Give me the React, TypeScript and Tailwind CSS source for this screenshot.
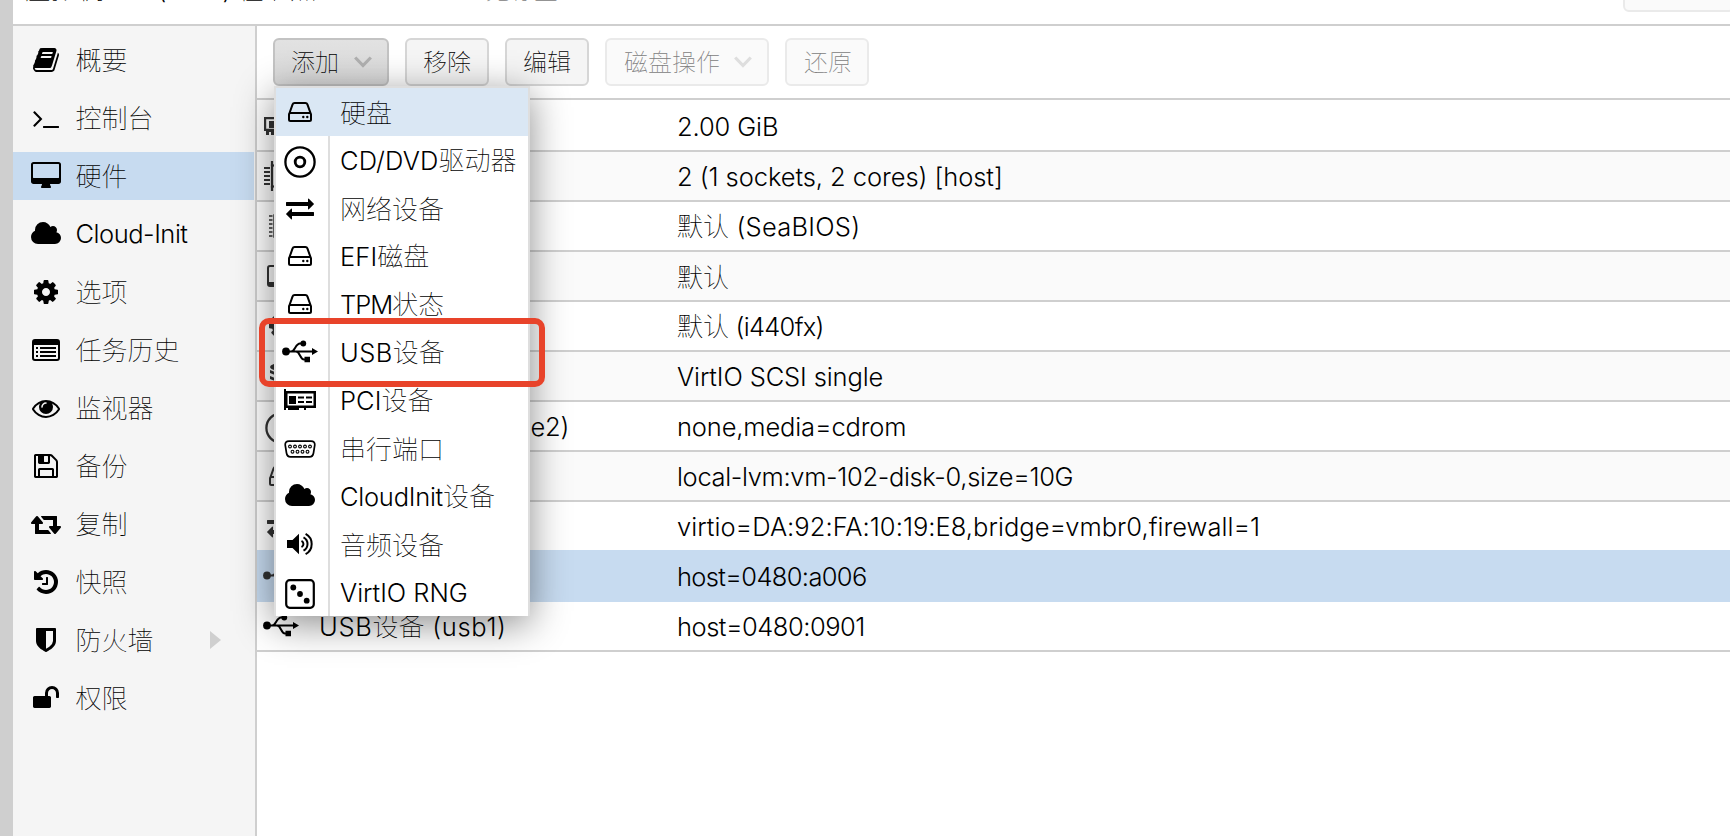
import type { ReactNode } from "react";

/* ---------- text ---------- */

/** Splits a label into Latin and Chinese runs so each gets its own optical size. */
function Label({ text, tracking = "tracking-[-0.255px]" }: { text: string; tracking?: string }) {
  const runs = text.match(/[\u4e00-\u9fff]+|[^\u4e00-\u9fff]+/g) ?? [];
  return (
    <span className="whitespace-pre">
      {runs.map((run, i) =>
        /[\u4e00-\u9fff]/.test(run) ? (
          <span key={i} className="font-thin font-['Noto_Sans_CJK_SC',sans-serif]">
            {run}
          </span>
        ) : (
          <span key={i} className={`font-light font-['Inter','Liberation_Sans',sans-serif] text-[25.5px] ${tracking}`}>
            {run}
          </span>
        ),
      )}
    </span>
  );
}

/* ---------- icons ---------- */

function Glyph({ d, w = 1792 }: { d: string; w?: number }) {
  return (
    <svg
      viewBox={w === 1792 ? "0 0 1792 1792" : w === 1920 ? "0 0 1920 1792" : "64 0 1920 1792"}
      className={w === 1792 ? "h-[28px] w-[28px] shrink-0" : "h-[28px] w-[30px] shrink-0"}
      fill="currentColor"
    >
      <path d={d} />
    </svg>
  );
}

const P = {
  book: "M1703 478q40 57 18 129l-275 906q-19 64-76.5 107.5t-122.5 43.5h-923q-77 0-148.5-53.5t-99.5-131.5q-24-67-2-127 0-4 3-27t4-37q1-8-3-21.5t-3-19.5q2-11 8-21t16.5-23.5 16.5-23.5q23-38 45-91.5t30-91.5q3-10 .5-30t-.5-28q3-11 17-28t17-23q21-36 42-92t25-90q1-9-2.5-32t.5-28q4-13 22-30.5t22-22.5q19-26 42.5-84.5t27.5-96.5q1-8-3-25.5t-2-26.5q2-8 9-18t18-23 17-21q8-12 16.5-30.5t15-35 16-36 19.5-32 26.5-23.5 36-11.5 47.5 5.5l-1 3q38-9 51-9h761q74 0 114 56t18 130l-274 906q-36 119-71.5 153.5t-128.5 34.5h-869q-27 0-38 15-11 16-1 43 24 70 144 70h923q29 0 56-15.5t35-41.5l300-987q7-22 5-57 38 15 59 43zm-1064 2q-4 13 2 22.5t20 9.5h608q13 0 25.5-9.5t16.5-22.5l21-64q4-13-2-22.5t-20-9.5h-608q-13 0-25.5 9.5t-16.5 22.5zm-83 256q-4 13 2 22.5t20 9.5h608q13 0 25.5-9.5t16.5-22.5l21-64q4-13-2-22.5t-20-9.5h-608q-13 0-25.5 9.5t-16.5 22.5z",
  terminal:
    "M649 983l-466 466q-10 10-23 10t-23-10l-50-50q-10-10-10-23t10-23l393-393-393-393q-10-10-10-23t10-23l50-50q10-10 23-10t23 10l466 466q10 10 10 23t-10 23zm1079 457v64q0 14-9 23t-23 9h-960q-14 0-23-9t-9-23v-64q0-14 9-23t23-9h960q14 0 23 9t9 23z",
  desktop:
    "M1792 992v-832q0-13-9.500-22.500t-22.500-9.500h-1600q-13 0-22.500 9.500t-9.500 22.500v832q0 13 9.500 22.500t22.500 9.500h1600q13 0 22.500-9.500t9.500-22.500zm128-832v1088q0 66-47 113t-113 47h-544q0 37 16 77.500t32 71 16 43.500q0 26-19 45t-45 19h-512q-26 0-45-19t-19-45q0-14 16-44t32-70 16-78h-544q-66 0-113-47t-47-113v-1088q0-66 47-113t113-47h1600q66 0 113 47t47 113z",
  cloud:
    "M1984 1152q0 159-112.5 271.5t-271.500 112.500h-1088q-185 0-316.500-131.500t-131.500-316.500q0-132 71-241.500t187-163.500q-2-28-2-43 0-212 150-362t362-150q158 0 286.500 88t187.500 230q70-62 166-62 106 0 181 75t75 181q0 75-41 138 129 30 213 134.500t84 239.500z",
  cog: "M1152 896q0-106-75-181t-181-75-181 75-75 181 75 181 181 75 181-75 75-181zm512-109v222q0 12-8 23t-20 13l-185 28q-19 54-39 91 35 50 107 138 10 12 10 25t-9 23q-27 37-99 108t-94 71q-12 0-26-9l-138-108q-44 23-91 38-16 136-29 186-7 28-36 28h-222q-14 0-24.5-8.5t-11.5-21.5l-28-184q-49-16-90-37l-141 107q-10 9-25 9-14 0-25-11-126-114-165-168-7-10-7-23 0-12 8-23 15-21 51-66.5t54-70.5q-27-50-41-99l-183-27q-13-2-21-12.5t-8-23.5v-222q0-12 8-23t19-13l186-28q14-46 39-92-40-57-107-138-10-12-10-24 0-10 9-23 26-36 98.5-107.5t94.5-71.5q13 0 26 10l138 107q44-23 91-38 16-136 29-186 7-28 36-28h222q14 0 24.5 8.5t11.5 21.5l28 184q49 16 90 37l142-107q9-9 24-9 13 0 25 10 129 119 165 170 7 8 7 22 0 12-8 23-15 21-51 66.5t-54 70.5q26 50 41 98l183 28q13 2 21 12.5t8 23.5z",
  eye: "M1664 960q-152-236-381-353 61 104 61 225 0 185-131.5 316.5t-316.5 131.5-316.5-131.5-131.5-316.5q0-121 61-225-229 117-381 353 133 205 333.5 326.5t434.5 121.5 434.5-121.5 333.5-326.5zm-720-384q0-20-14-34t-34-14q-125 0-214.5 89.5t-89.5 214.5q0 20 14 34t34 14 34-14 14-34q0-86 61-147t147-61q20 0 34-14t14-34zm848 384q0 34-20 69-140 230-376.5 368.5t-499.5 138.5-499.5-139-376.5-368q-20-35-20-69t20-69q140-229 376.5-368t499.5-139 499.5 139 376.5 368q20 35 20 69z",
  floppy:
    "M512 1536h768v-384h-768v384zm896 0h128v-896q0-14-10-38.5t-20-34.5l-281-281q-10-10-34-20t-39-10v416q0 40-28 68t-68 28h-576q-40 0-68-28t-28-68v-416h-128v1280h128v-416q0-40 28-68t68-28h832q40 0 68 28t28 68v416zm-384-928v-320q0-13-9.5-22.5t-22.5-9.5h-192q-13 0-22.5 9.5t-9.5 22.5v320q0 13 9.5 22.5t22.5 9.5h192q13 0 22.5-9.5t9.5-22.5zm640 32v928q0 40-28 68t-68 28h-1344q-40 0-68-28t-28-68v-1344q0-40 28-68t68-28h928q40 0 88 20t76 48l280 280q28 28 48 76t20 88z",
  retweet:
    "M1280 1504q0 13-9.5 22.5t-22.5 9.5h-960q-8 0-13.5-2t-9-7-5.5-8-3-11.500-1-11.500v-600h-192q-26 0-45-19t-19-45q0-24 15-41l320-384q19-22 49-22t49 22l320 384q15 17 15 41 0 26-19 45t-45 19h-192v384h576q16 0 25 11l160 192q7 10 7 21zm640-416q0 24-15 41l-320 384q-20 23-49 23t-49-23l-320-384q-15-17-15-41 0-26 19-45t45-19h192v-384h-576q-16 0-25-12l-160-192q-7-9-7-20 0-13 9.500-22.500t22.500-9.500h960q8 0 13.500 2t9 7 5.500 8 3 11.500 1 11.500v600h192q26 0 45 19t19 45z",
  history:
    "M1664 896q0 156-61 298t-164 245-245 164-298 61q-172 0-327-72.5t-264-204.5q-7-10-6.5-22.5t8.5-20.5l137-138q10-9 25-9 16 2 23 12 73 95 179 147t225 52q104 0 198.5-40.5t163.500-109.500 109.500-163.500 40.500-198.500-40.500-198.500-109.500-163.500-163.500-109.500-198.500-40.500q-98 0-188 35.500t-160 101.500l137 138q31 30 14 69-17 40-59 40h-448q-26 0-45-19t-19-45v-448q0-42 40-59 39-17 69 14l130 129q107-101 244.500-156.500t284.500-55.500q156 0 298 61t245 164 164 245 61 298zm-640-288v448q0 14-9 23t-23 9h-320q-14 0-23-9t-9-23v-64q0-14 9-23t23-9h224v-352q0-14 9-23t23-9h64q14 0 23 9t9 23z",
  shield:
    "M1344 960v-640h-448v1137q119-63 213-137 235-184 235-360zm192-768v768q0 86-33.5 170.500t-83 150-118 127.500-126.500 103-121 77.500-89.500 49.500-42.500 20q-12 6-26 6t-26-6q-16-7-42.500-20t-89.500-49.500-121-77.500-126.500-103-118-127.500-83-150-33.500-170.500v-768q0-26 19-45t45-19h1152q26 0 45 19t19 45z",
  unlock:
    "M1728 576v256q0 26-19 45t-45 19h-64q-26 0-45-19t-19-45v-256q0-106-75-181t-181-75-181 75-75 181v192h96q40 0 68 28t28 68v576q0 40-28 68t-68 28h-960q-40 0-68-28t-28-68v-576q0-40 28-68t68-28h672v-192q0-185 131.5-316.500t316.500-131.500 316.500 131.500 131.500 316.500z",
  exchange:
    "M1792 1184v192q0 13-9.500 22.500t-22.500 9.500h-1376v192q0 13-9.500 22.500t-22.500 9.500q-12 0-24-10l-319-320q-9-9-9-22 0-14 9-23l320-320q9-9 23-9 13 0 22.500 9.500t9.500 22.500v192h1376q13 0 22.500 9.500t9.500 22.500zm0-544q0 14-9 23l-320 320q-9 9-23 9-13 0-22.500-9.500t-9.500-22.500v-192h-1376q-13 0-22.500-9.500t-9.500-22.500v-192q0-13 9.500-22.500t22.500-9.500h1376v-192q0-14 9-23t23-9q12 0 24 10l319 319q9 9 9 23z",
};

const ListAlt = () => (
  <svg viewBox="0 0 28 28" className="h-[28px] w-[28px]" fill="currentColor">
    <path d="M3 3h22a3 3 0 0 1 3 3v16a3 3 0 0 1-3 3H3a3 3 0 0 1-3-3V6a3 3 0 0 1 3-3zm-1 6v13a1 1 0 0 0 1 1h22a1 1 0 0 0 1-1V9z" fillRule="evenodd" />
    <path d="M4 11h2v2H4zM4 15h2v2H4zM4 19h2v2H4zM8 11h16v2H8zM8 15h16v2H8zM8 19h16v2H8z" />
  </svg>
);

const Hdd = () => (
  <svg viewBox="0 0 28 28" className="h-[28px] w-[28px]" fill="none" stroke="currentColor" strokeWidth="2">
    <path d="M3 16.500 6.600 6.400Q7.100 5 8.600 5h10.800q1.500 0 2 1.400L25 16.500v5q0 1.500-1.500 1.500h-19Q3 23 3 21.500v-5Q3 15 4.500 15h19q1.500 0 1.500 1.500" />
    <circle cx="17.300" cy="19" r="1.200" fill="currentColor" stroke="none" />
    <circle cx="21.300" cy="19" r="1.200" fill="currentColor" stroke="none" />
  </svg>
);

const Disc = () => (
  <svg viewBox="0 0 32 32" className="mt-[3px] h-[32px] w-[32px]" fill="none" stroke="currentColor">
    <circle cx="16" cy="16" r="14.600" strokeWidth="2.300" />
    <circle cx="16" cy="16" r="4.800" strokeWidth="2.800" />
  </svg>
);

const Usb = () => (
  <svg viewBox="0 0 36 28" className="h-[28px] w-[36px] shrink-0" fill="none" stroke="currentColor" strokeWidth="2">
    <circle cx="4" cy="13.500" r="3.900" fill="currentColor" stroke="none" />
    <path d="M4 13.500h28M9 13.500c4 0 4.500-8 9-8h3M14 13.500c4 0 4 8 8 8h3" />
    <circle cx="21.300" cy="5.500" r="2.900" fill="currentColor" stroke="none" />
    <path d="M22.500 18.800h5.500v5.500h-5.500zM30 10l6 3.500-6 3.500z" fill="currentColor" stroke="none" />
  </svg>
);

const Pci = () => (
  <svg viewBox="0 0 32 22" className="h-[22px] w-[32px]" fill="currentColor">
    <path d="M0 0h2v2h30v17H2v2H0zM3.500 4.500v12H29.500v-12z" fillRule="evenodd" />
    <path d="M5 7h7v8H5zM14 7.500h6v2h-6zM22 7.500h6v2h-6zM14 12h6v2h-6zM22 12h6v2h-6zM4 19h11v2H4zM20 19h2v2h-2z" />
  </svg>
);

const Serial = () => (
  <svg viewBox="0 0 32 18" className="mt-[2px] h-[18px] w-[32px]" fill="none" stroke="currentColor">
    <path d="M5 1.200h22q4 0 3.800 3.800l-1.300 8q-.6 3.800-4 3.800h-19q-3.400 0-4-3.800L1.200 5Q1 1.200 5 1.200z" strokeWidth="1.700" />
    <g strokeWidth="1.100">
      <circle cx="6" cy="6.500" r="1.400" />
      <circle cx="11" cy="6.500" r="1.400" />
      <circle cx="16" cy="6.500" r="1.400" />
      <circle cx="21" cy="6.500" r="1.400" />
      <circle cx="26" cy="6.500" r="1.400" />
      <circle cx="8.500" cy="11.700" r="1.400" />
      <circle cx="13.500" cy="11.700" r="1.400" />
      <circle cx="18.500" cy="11.700" r="1.400" />
      <circle cx="23.500" cy="11.700" r="1.400" />
    </g>
  </svg>
);

const Volume = () => (
  <svg viewBox="0 0 26 24" className="h-[24px] w-[26px]" fill="none" stroke="currentColor" strokeWidth="2">
    <path d="M0 8h5.500l6.500-6.200v20.400L5.500 16H0z" fill="currentColor" stroke="none" />
    <path d="M14.500 8.800a3.600 3.600 0 0 1 0 6.400M16.500 5.300a7.600 7.600 0 0 1 0 13.400M18.600 1.800a11.600 11.600 0 0 1 0 20.400" />
  </svg>
);

const Dice = () => (
  <svg viewBox="0 0 30 30" className="mt-[3px] h-[30px] w-[30px]" fill="currentColor">
    <rect x="1.200" y="1.200" width="27.600" height="27.600" rx="3.500" fill="none" stroke="currentColor" strokeWidth="2.200" />
    <circle cx="8.300" cy="8.500" r="2.900" />
    <circle cx="15" cy="15" r="2.900" />
    <circle cx="21.700" cy="21.700" r="2.900" />
  </svg>
);

const Memory = () => (
  <svg viewBox="0 0 32 18" className="-ml-[2px] h-[18px] w-[32px]" fill="currentColor">
    <path d="M0 0h32v14h-2v4h-3v-3h-2v3h-3v-3H10v3H7v-3H5v3H2v-4H0zM2.200 2.200v9.600h27.600V2.200z" fillRule="evenodd" />
    <path d="M5 4h8v7H5zM18 4h8v7h-8z" />
  </svg>
);

const Cpu = () => (
  <svg viewBox="0 0 32 32" className="-ml-[2px] h-[32px] w-[32px]" fill="none" stroke="currentColor" strokeWidth="2.200">
    <rect x="8" y="5.500" width="16" height="21" />
    <path d="M0 8h6M0 12h6M0 16h6M0 20h6M0 24h6M26 8h6M26 12h6M26 16h6M26 20h6M26 24h6M8 1v5M14 1v5M20 1v5M8 26v5M14 26v5M20 26v5" />
  </svg>
);

const Bios = () => (
  <svg viewBox="0 0 24 24" className="h-[24px] w-[24px]" fill="none" stroke="currentColor" strokeWidth="1.400">
    <path d="M5 1h14v22H5z" />
    <path d="M0 2h3.500M0 6h3.500M0 10h3.500M0 14h3.500M0 18h3.500M0 22h3.500M20.500 2H24M20.500 6H24M20.500 10H24M20.500 14H24M20.500 18H24M20.500 22H24" />
  </svg>
);

const Screen = () => (
  <svg viewBox="0 0 28 22" className="h-[22px] w-[28px]" fill="currentColor">
    <path d="M3 0h22a3 3 0 0 1 3 3v16a3 3 0 0 1-3 3H3a3 3 0 0 1-3-3V3a3 3 0 0 1 3-3zm0 2a1 1 0 0 0-1 1v14h24V3a1 1 0 0 0-1-1z" fillRule="evenodd" />
  </svg>
);

const Database = () => (
  <svg viewBox="0 0 22 26" className="h-[26px] w-[22px]" fill="currentColor">
    <ellipse cx="11" cy="4" rx="11" ry="4" />
    <path d="M0 7q11 6 22 0v3q-11 6-22 0zM0 13q11 6 22 0v3q-11 6-22 0zM0 19q11 6 22 0v3q-11 7-22 0z" />
  </svg>
);

const Chevron = () => (
  <svg viewBox="0 0 18 12" className="h-[12px] w-[18px]" fill="none" stroke="currentColor" strokeWidth="3.200">
    <path d="M1.200 1.500 9 9.500l7.800-8" />
  </svg>
);

/* ---------- data ---------- */

type Item = { icon: ReactNode; text: string; tracking?: string };

const nav: (Item & { active?: boolean; arrow?: boolean })[] = [
  { icon: <Glyph d={P.book} />, text: "概要" },
  { icon: <Glyph d={P.terminal} />, text: "控制台" },
  { icon: <Glyph d={P.desktop} w={1920} />, text: "硬件", active: true },
  { icon: <Glyph d={P.cloud} w={2048} />, text: "Cloud-Init", tracking: "tracking-[-0.48px]" },
  { icon: <Glyph d={P.cog} />, text: "选项" },
  { icon: <ListAlt />, text: "任务历史" },
  { icon: <Glyph d={P.eye} />, text: "监视器" },
  { icon: <Glyph d={P.floppy} />, text: "备份" },
  { icon: <Glyph d={P.retweet} w={1920} />, text: "复制" },
  { icon: <Glyph d={P.history} />, text: "快照" },
  { icon: <Glyph d={P.shield} />, text: "防火墙", arrow: true },
  { icon: <Glyph d={P.unlock} />, text: "权限" },
];

const rows: (Item & { value: string; labelTracking?: string; selected?: boolean })[] = [
  { icon: <Memory />, text: "内存", value: "2.00 GiB", tracking: "tracking-[-0.12px]" },
  { icon: <Cpu />, text: "处理器", value: "2 (1 sockets, 2 cores) [host]", tracking: "tracking-[-0.065px]" },
  { icon: <Bios />, text: "BIOS", value: "默认 (SeaBIOS)", tracking: "tracking-[0.25px]" },
  { icon: <Screen />, text: "显示", value: "默认" },
  { icon: <Glyph d={P.cog} />, text: "机型", value: "默认 (i440fx)", tracking: "tracking-[-0.7px]" },
  { icon: <Database />, text: "SCSI控制器", value: "VirtIO SCSI single", tracking: "tracking-[-0.12px]" },
  {
    icon: <Disc />,
    text: "CD/DVD驱动器 (ide2)",
    labelTracking: "tracking-[-0.17px]",
    value: "none,media=cdrom",
    tracking: "tracking-[-0.15px]",
  },
  { icon: <Hdd />, text: "硬盘 (scsi0)", value: "local-lvm:vm-102-disk-0,size=10G", tracking: "tracking-[-0.34px]" },
  {
    icon: <Glyph d={P.exchange} />,
    text: "网络设备 (net0)",
    value: "virtio=DA:92:FA:10:19:E8,bridge=vmbr0,firewall=1",
    tracking: "tracking-[0.035px]",
  },
  { icon: <Usb />, text: "USB设备 (usb0)", value: "host=0480:a006", selected: true, tracking: "tracking-[-0.65px]" },
  {
    icon: <Usb />,
    text: "USB设备 (usb1)",
    labelTracking: "tracking-[0.65px]",
    value: "host=0480:0901",
    tracking: "tracking-[-0.5px]",
  },
];

const menu: Item[] = [
  { icon: <Hdd />, text: "硬盘" },
  { icon: <Disc />, text: "CD/DVD驱动器", tracking: "tracking-[0.1px]" },
  { icon: <Glyph d={P.exchange} />, text: "网络设备" },
  { icon: <Hdd />, text: "EFI磁盘", tracking: "tracking-[0.1px]" },
  { icon: <Hdd />, text: "TPM状态", tracking: "tracking-[-1px]" },
  { icon: <Usb />, text: "USB设备", tracking: "tracking-[0.4px]" },
  { icon: <Pci />, text: "PCI设备", tracking: "tracking-[0.1px]" },
  { icon: <Serial />, text: "串行端口" },
  { icon: <Glyph d={P.cloud} w={2048} />, text: "CloudInit设备" },
  { icon: <Volume />, text: "音频设备" },
  { icon: <Dice />, text: "VirtIO RNG", tracking: "tracking-[-0.03px]" },
];

/* ---------- parts ---------- */

function ToolButton({ text, tone, arrow }: { text: string; tone: "pressed" | "normal" | "disabled"; arrow?: boolean }) {
  const tones = {
    pressed: "border-[#c3c3c3] bg-linear-to-b from-[#e2e2e2] to-[#d8d8d8] pl-[16px]",
    normal: "border-[#d6d6d6] bg-[#f5f5f5] pl-[16px]",
    disabled: "border-[#eaeaea] bg-[#fafafa] pl-[17px] text-[#808080]",
  };
  return (
    <button
      className={`flex h-[48px] items-center rounded-[6px] border-2 text-[24px] leading-none ${
        arrow || tone === "disabled" ? "pr-[15px]" : "pr-[16px]"
      } ${tones[tone]}`}
    >
      <span className="pb-[2px]">
        <Label text={text} />
      </span>
      {arrow && (
        <span className={tone === "pressed" ? "ml-[15px] text-[#b0b0b0]" : "ml-[14px] text-[#dedede]"}>
          <Chevron />
        </span>
      )}
    </button>
  );
}

function Sidebar() {
  return (
    <nav className="flex w-[244px] shrink-0 flex-col gap-[10px] border-r-2 border-[#cfcfcf] bg-[#f5f5f5] pt-[10px]">
      {nav.map((n) => (
        <div key={n.text} className={`mr-px flex h-[48px] items-center ${n.active ? "bg-[#c7dbf0]" : ""}`}>
          <span className="ml-[14.5px] flex w-[36px] justify-center">{n.icon}</span>
          <span className="ml-[12px] flex-1 pb-[2px]">
            <Label text={n.text} tracking={n.tracking} />
          </span>
          {n.arrow && (
            <svg viewBox="0 0 11 18" className="mr-[33px] h-[18px] w-[11px]" fill="#cfcfcf">
              <path d="M0 0l11 9-11 9z" />
            </svg>
          )}
        </div>
      ))}
    </nav>
  );
}

function AddMenu() {
  return (
    <div className="absolute top-[86px] left-[274px] w-[256px] border-x-2 border-t-2 border-[#dedede] bg-white shadow-[0_8px_36px_rgba(0,0,0,0.45)]">
      {menu.map((m, i) => (
        <div key={m.text} className={`flex h-[48px] items-center ${i === 0 ? "bg-[#dae7f4]" : ""}`}>
          <span className={`flex h-full w-[54px] items-center justify-center border-r-2 pr-[4px] ${i === 0 ? "border-transparent" : "border-[#dedede]"}`}>
            {m.icon}
          </span>
          <span className="ml-[10px]">
            <Label text={m.text} tracking={m.tracking} />
          </span>
        </div>
      ))}
    </div>
  );
}

export default function App() {
  return (
    <div className="relative flex h-[836px] w-[1730px] overflow-hidden bg-white text-[26px] leading-none text-black">
      <div className="w-[13px] shrink-0 bg-[#cfcfcf]" />
      <div className="flex min-w-0 flex-1 flex-col">
        <header className="flex h-[26px] shrink-0 items-start overflow-hidden border-b-2 border-[#cfcfcf] pl-[12px]">
          <div className="-mt-[25px]">
            <Label text="虚拟机 102 (haos) 在节点" />
          </div>
          <div className="-mt-[23px] ml-[170px] text-[24px] text-[#808080]">
            <Label text="无标签" />
          </div>
          <div className="-mt-[36px] -mr-[4px] ml-auto h-[48px] w-[111px] rounded-[6px] border-2 border-[#eaeaea] bg-[#fafafa]" />
        </header>
        <div className="flex min-h-0 flex-1">
          <Sidebar />
          <main className="flex min-w-0 flex-1 flex-col">
            <div className="flex h-[74px] shrink-0 gap-[16px] border-b-2 border-[#cfcfcf] pt-[12px] pl-[16px]">
              <ToolButton text="添加" tone="pressed" arrow />
              <ToolButton text="移除" tone="normal" />
              <ToolButton text="编辑" tone="normal" />
              <ToolButton text="磁盘操作" tone="disabled" arrow />
              <ToolButton text="还原" tone="disabled" />
            </div>
            <div className="flex flex-col">
              {rows.map((r, i) => (
                <div
                  key={r.text}
                  className={`flex items-center border-b-2 ${
                    r.selected
                      ? "-mt-[2px] h-[52px] border-[#c7dbf0] bg-[#c7dbf0] pt-[2px]"
                      : i === 0
                        ? "h-[52px] border-[#cfcfcf] pt-[2px]"
                        : i % 2
                          ? "h-[50px] border-[#cfcfcf] bg-[#fafafa]"
                          : "h-[50px] border-[#cfcfcf]"
                  }`}
                >
                  <span className={`ml-[4px] flex w-[40px] justify-center ${i < rows.length - 1 ? "text-[#333]" : ""}`}>{r.icon}</span>
                  <span className="ml-[18px] w-[358px]">
                    <Label text={r.text} tracking={r.labelTracking} />
                  </span>
                  <Label text={r.value} tracking={r.tracking} />
                </div>
              ))}
            </div>
          </main>
        </div>
      </div>
      <AddMenu />
      <div className="absolute top-[318px] left-[259px] h-[69px] w-[286px] rounded-[10px] border-[6px] border-[#e8432a]" />
    </div>
  );
}
